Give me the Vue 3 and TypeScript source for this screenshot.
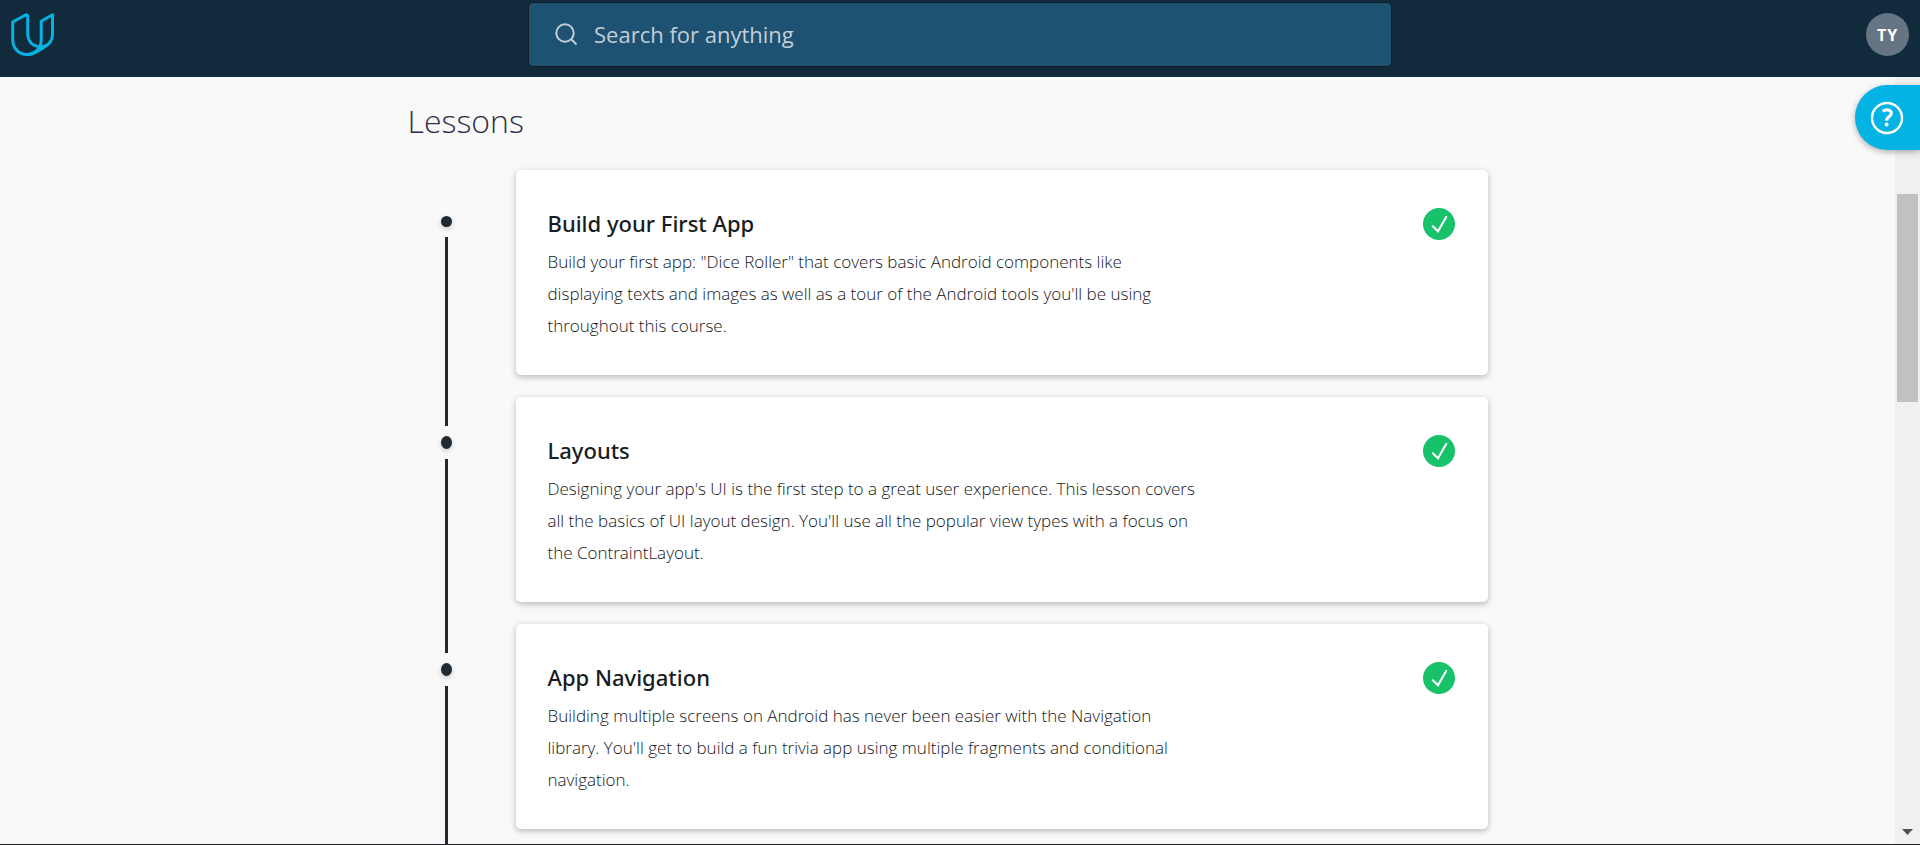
<script setup lang="ts">
interface Lesson {
  title: string
  description: string
  done: boolean
}

const lessons: Lesson[] = [
  {
    title: 'Build your First App',
    description:
      'Build your first app: "Dice Roller" that covers basic Android components like displaying texts and images as well as a tour of the Android tools you\'ll be using throughout this course.',
    done: true,
  },
  {
    title: 'Layouts',
    description:
      "Designing your app's UI is the first step to a great user experience. This lesson covers all the basics of UI layout design. You'll use all the popular view types with a focus on the ContraintLayout.",
    done: true,
  },
  {
    title: 'App Navigation',
    description:
      "Building multiple screens on Android has never been easier with the Navigation library. You'll get to build a fun trivia app using multiple fragments and conditional navigation.",
    done: true,
  },
]
</script>

<template>
  <div class="page">
    <header class="topbar">
      <a class="logo" href="#" aria-label="Home">
        <svg viewBox="0 0 44 44" width="44" height="44" fill="none" stroke="#02b3e4" stroke-width="3" stroke-linejoin="round">
          <path d="M15 1.7 1.7 9V26.500C1.700 35 7.500 41.500 15.800 41.500C24 41.500 30.200 35.500 30.200 27V8.300L41.500 1.700V20.500C41.500 28.500 37 33.600 29.500 33.600C21.500 33.600 16.700 28.500 16.700 20V2.500Z" />
          <path d="M40 27.500C38 32 33 34.500 28 37.500C24 40 21 41.500 15.800 41.500" />
        </svg>
      </a>
      <label class="search">
        <svg viewBox="0 0 24 24" width="24" height="24" fill="none" stroke="#c3ced6" stroke-width="2">
          <circle cx="11" cy="10" r="8.700" />
          <path d="M17 16 22.500 21.500" />
        </svg>
        <input type="text" placeholder="Search for anything" aria-label="Search for anything" />
      </label>
      <button class="avatar" type="button">TY</button>
    </header>

    <div class="body">
      <main class="content">
        <h1>Lessons</h1>
        <ol class="lessons">
          <li v-for="lesson in lessons" :key="lesson.title" class="lesson">
            <div class="rail" aria-hidden="true">
              <span class="line lead"></span>
              <span class="dot"></span>
              <span class="line tail"></span>
            </div>
            <article class="card">
              <div class="text">
                <h2>{{ lesson.title }}</h2>
                <p>{{ lesson.description }}</p>
              </div>
              <svg v-if="lesson.done" class="check" viewBox="0 0 32 32" width="32" height="32" role="img" aria-label="Completed">
                <circle cx="16" cy="16" r="16" fill="#17c26b" />
                <path d="M9.800 18.300 15 23.300 23.300 8.800" fill="none" stroke="#fff" stroke-width="2" stroke-linecap="round" />
              </svg>
            </article>
          </li>
        </ol>
      </main>
      <div class="scrollbar" aria-hidden="true">
        <span class="above"></span>
        <span class="thumb"></span>
        <span class="below"></span>
        <svg viewBox="0 0 11 6" width="11" height="6"><path d="M0 0H11L5.500 6Z" fill="#505050" /></svg>
      </div>
    </div>

    <button class="help" type="button" aria-label="Help">
      <svg viewBox="0 0 34 34" width="34" height="34" fill="none" stroke="#fff">
        <circle cx="17" cy="17" r="15" stroke-width="2.400" />
        <path d="M12.600 10.300C15.500 8.300 21.300 8.200 21.300 12.300C21.300 15.700 16.600 15.600 16.600 19.800" stroke-width="3.200" />
        <circle cx="16.600" cy="23.600" r="2" fill="#fff" stroke="none" />
      </svg>
    </button>
  </div>
</template>

<style>
body {
  margin: 0;
}
</style>

<style scoped>
.page {
  display: flex;
  flex-direction: column;
  box-sizing: border-box;
  height: 100vh;
  overflow: hidden;
  border-bottom: 1px solid #202124;
  background: #f9f9f9;
  font-family: "Open Sans", "Noto Sans", sans-serif;
}

.topbar {
  display: grid;
  flex: none;
  grid-template-columns: 1fr 45% 1fr;
  align-items: center;
  padding: 2px 0 10px;
  background: #112b3d;
}

.logo {
  justify-self: start;
  height: 44px;
  margin-left: 11px;
}

.search {
  display: flex;
  align-items: center;
  gap: 16px;
  box-sizing: border-box;
  height: 65px;
  padding: 0 25px;
  border: 1px solid #12191f;
  border-radius: 5px;
  background: #1e5272;
}

.search input {
  flex: 1;
  min-width: 0;
  padding: 0 0 2px;
  border: 0;
  outline: 0;
  background: transparent;
  color: #fff;
  font: 400 22px/32px "Open Sans", "Noto Sans", sans-serif;
}

.search input::placeholder {
  color: #c3ced6;
  opacity: 1;
}

.avatar {
  justify-self: end;
  width: 43px;
  height: 43px;
  margin-right: 11px;
  padding: 0;
  border: 0;
  border-radius: 50%;
  background: #667583;
  color: #fff;
  font: 700 16px/24px "Open Sans", "Noto Sans", sans-serif;
  letter-spacing: 1px;
}

.body {
  display: flex;
  flex: 1;
  min-height: 0;
}

.content {
  flex: 1;
  min-width: 0;
  overflow: hidden;
}

h1 {
  max-width: 1080px;
  margin: 22px auto 27px;
  color: #2e3048;
  font-size: 32px;
  font-weight: 300;
  line-height: 44px;
}

.lessons {
  max-width: 1080px;
  margin: 0 auto;
  padding: 0;
  list-style: none;
}

.lesson {
  display: flex;
}

.rail {
  display: flex;
  flex: none;
  flex-direction: column;
  align-items: center;
  gap: 10px;
  width: 77px;
  margin-right: 31px;
}

.line {
  width: 3px;
  background: #1f2a33;
}

.lead {
  height: 29px;
}

.lesson:first-child .lead {
  height: 36px;
  background: transparent;
}

.tail {
  flex: 1;
}

.dot {
  width: 11px;
  height: 13px;
  border-radius: 50%;
  background: #1f2a33;
  box-shadow: 0 2px 5px rgba(46, 61, 73, 0.25);
}

.lesson:first-child .dot {
  height: 11px;
}

.card {
  display: flex;
  flex: 1;
  align-items: flex-start;
  justify-content: space-between;
  gap: 32px;
  margin-bottom: 22px;
  padding: 38px 33px 33px 32px;
  border-radius: 5px;
  background: #fff;
  box-shadow: 0 2px 6px rgba(0, 0, 0, 0.27);
}

.text {
  max-width: 648px;
}

h2 {
  margin: 0 0 8px;
  color: #171d22;
  font-family: "Noto Sans", "Open Sans", sans-serif;
  font-size: 22px;
  font-weight: 500;
  line-height: 30px;
}

p {
  margin: 0;
  color: #12171b;
  font-size: 17px;
  font-weight: 300;
  line-height: 32px;
}

.check {
  flex: none;
}

.scrollbar {
  display: flex;
  flex: none;
  flex-direction: column;
  align-items: center;
  box-sizing: border-box;
  width: 25px;
  padding-bottom: 9px;
  background: #f0f0f0;
}

.above {
  flex: 117;
}

.thumb {
  flex: 208;
  width: 21px;
  background: #c1c1c1;
}

.below {
  flex: 427;
}

.help {
  display: flex;
  position: absolute;
  top: 85px;
  right: 0;
  align-items: center;
  box-sizing: border-box;
  width: 65px;
  height: 65px;
  padding: 0 0 0 15px;
  border: 0;
  border-radius: 33px 0 0 33px;
  background: #02b3e4;
  box-shadow: 0 2px 6px rgba(0, 0, 0, 0.3);
}
</style>
